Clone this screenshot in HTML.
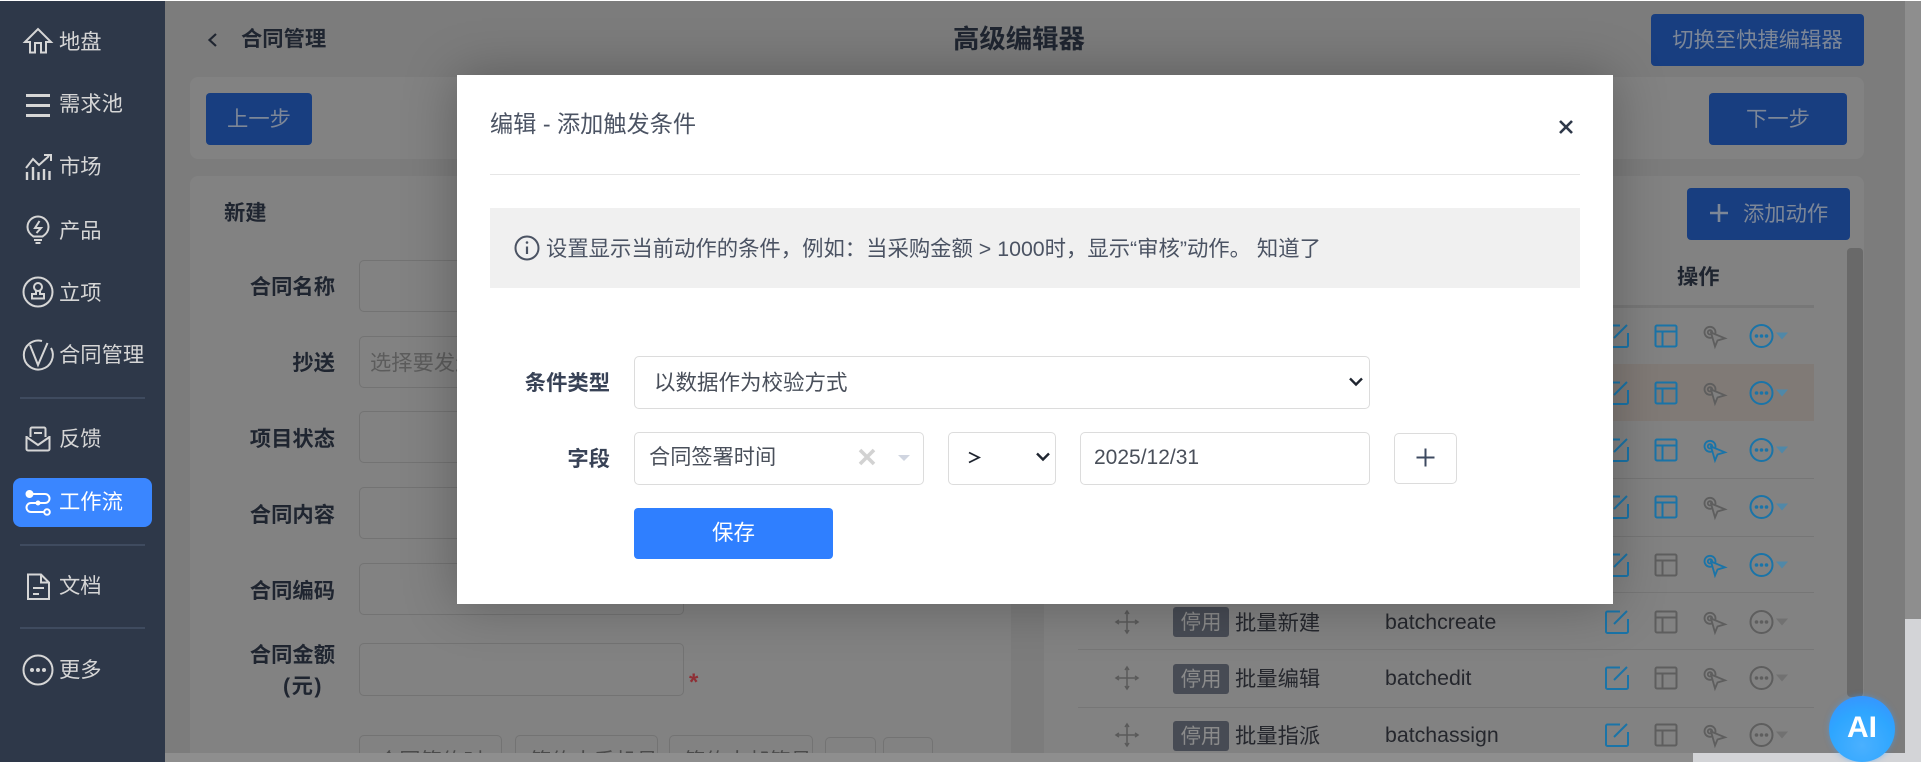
<!DOCTYPE html>
<html lang="zh"><head><meta charset="utf-8"><title>高级编辑器</title>
<style>
html,body{margin:0;padding:0;background:#fff;width:1921px;height:763px;overflow:hidden}
body{position:relative;font-family:"Liberation Sans","Noto Sans CJK SC",sans-serif;font-size:21.3px}
div,span{box-sizing:border-box}
.a{position:absolute}
.t{position:absolute;white-space:nowrap;line-height:30px;height:30px;margin-top:1px;filter:blur(.25px)}
.r{text-align:right}
.b{font-weight:700}
.card{position:absolute;background:#828282;border-radius:8px 8px 0 0}
.btn{position:absolute;background:#183e80;border-radius:4px;color:#7d8797;text-align:center;font-size:21.3px}
.in{position:absolute;border:1.5px solid #737373;border-radius:5px}
.nav{color:#d6d6d6;left:59px}
.lab{color:#1f2530;font-weight:700;left:215px;width:120px;text-align:right}
.hr{position:absolute;left:20px;width:125px;height:2px;background:#3f4b5f}
.tag{position:absolute;left:1173px;width:56px;height:30px;background:#474b54;border-radius:3px;color:#8b8b8b;text-align:center;line-height:31px;font-size:20.5px}
.nm{color:#25272d;left:1235px}
.cd{color:#25272d;left:1385px;font-size:21.3px}
.mb{position:absolute;border:1.5px solid #dcdcdc;border-radius:5px;background:#fff}
</style></head>
<body>
<!-- main background -->
<div class="a" style="left:165px;top:1px;width:1740px;height:752px;background:#7c7c7c"></div>
<div class="card" style="left:190px;top:77px;width:1674px;height:82px;border-radius:8px"></div>
<div class="card" style="left:190px;top:176px;width:821px;height:577px"></div>
<div class="card" style="left:1044px;top:176px;width:820px;height:577px"></div>

<!-- header -->
<div class="t b" style="left:241px;top:23px;color:#1f2530">合同管理</div>
<div class="t b" style="left:953px;top:23px;color:#1f2530;font-size:26.4px">高级编辑器</div>
<div class="btn" style="left:1651px;top:14px;width:213px;height:52px;line-height:53px">切换至快捷编辑器</div>
<div class="btn" style="left:206px;top:93px;width:106px;height:52px;line-height:53px">上一步</div>
<div class="btn" style="left:1709px;top:93px;width:138px;height:52px;line-height:53px">下一步</div>
<div class="btn" style="left:1687px;top:188px;width:163px;height:52px"></div>
<div class="t" style="left:1743px;top:198px;color:#7d8797">添加动作</div>

<!-- left form -->
<div class="t b" style="left:224px;top:197px;color:#1f2530">新建</div>
<div class="t lab" style="top:271px">合同名称</div>
<div class="t lab" style="top:347px">抄送</div>
<div class="t lab" style="top:423px">项目状态</div>
<div class="t lab" style="top:499px">合同内容</div>
<div class="t lab" style="top:575px">合同编码</div>
<div class="t lab" style="top:639px">合同金额</div>
<div class="t lab" style="top:670px;width:108px;letter-spacing:1.5px">(元)</div>
<div class="in" style="left:359px;top:260px;width:325px;height:52px"></div>
<div class="in" style="left:359px;top:336px;width:325px;height:52px"></div>
<div class="t" style="left:370px;top:347px;color:#5c5c5c">选择要发送的人</div>
<div class="in" style="left:359px;top:411px;width:325px;height:52px"></div>
<div class="in" style="left:359px;top:487px;width:325px;height:52px"></div>
<div class="in" style="left:359px;top:563px;width:325px;height:52px"></div>
<div class="in" style="left:359px;top:643px;width:325px;height:53px"></div>
<div class="t" style="left:689px;top:667px;color:#8f2f35;font-size:24px;font-weight:700">*</div>
<div class="in" style="left:359px;top:735px;width:143px;height:50px"></div>
<div class="in" style="left:515px;top:735px;width:143px;height:50px"></div>
<div class="in" style="left:669px;top:735px;width:144px;height:50px"></div>
<div class="in" style="left:825px;top:737px;width:51px;height:50px"></div>
<div class="in" style="left:883px;top:737px;width:50px;height:50px"></div>
<div class="t" style="left:378px;top:745px;color:#4b4b4b">合同签约时</div>
<div class="t" style="left:530px;top:745px;color:#4b4b4b">签约人手机号</div>
<div class="t" style="left:684px;top:745px;color:#4b4b4b">签约人邮箱号</div>

<!-- right table -->
<div class="t b" style="left:1677px;top:261px;color:#1f2530">操作</div>
<div class="a" style="left:1078px;top:305px;width:736px;height:3px;background:#777"></div>
<div class="a" style="left:1078px;top:364px;width:736px;height:57px;background:#807a76"></div>
<div class="a" style="left:1078px;top:478px;width:736px;height:1px;background:#767676"></div>
<div class="a" style="left:1078px;top:536px;width:736px;height:1px;background:#767676"></div>
<div class="a" style="left:1078px;top:592px;width:736px;height:1px;background:#767676"></div>
<div class="a" style="left:1078px;top:649px;width:736px;height:1px;background:#767676"></div>
<div class="a" style="left:1078px;top:707px;width:736px;height:1px;background:#767676"></div>
<div class="a" style="left:1847px;top:248px;width:16px;height:449px;background:#696969;border-radius:4px"></div>

<div class="tag" style="top:607px">停用</div>
<div class="t nm" style="top:607px">批量新建</div>
<div class="t cd" style="top:606px">batchcreate</div>
<div class="tag" style="top:664px">停用</div>
<div class="t nm" style="top:663px">批量编辑</div>
<div class="t cd" style="top:662px">batchedit</div>
<div class="tag" style="top:721px">停用</div>
<div class="t nm" style="top:720px">批量指派</div>
<div class="t cd" style="top:719px">batchassign</div>

<svg class="a" style="left:0;top:0" width="1921" height="763" fill="none" stroke-width="2">
<defs>
<g id="ed" stroke="currentColor" stroke-width="2" fill="none"><path d="M3-10.500H-9.500A1.500 1.500 0 0 0-11-9V9.500A1.500 1.500 0 0 0-9.500 11H9.500A1.500 1.500 0 0 0 11 9.500V-3M-3 2L10-11"/></g>
<g id="la" stroke="currentColor" stroke-width="2" fill="none"><rect x="-10.500" y="-10.500" width="21" height="21" rx="1.500"/><path d="M-10.500-4.500H10.500M-3.500-4.500V10.500"/></g>
<g id="cu" stroke="currentColor" stroke-width="1.800" fill="none"><circle cx="-5" cy="-3.700" r="5.500"/><circle cx="-5" cy="-3.700" r="2.200"/><path d="M-4-3.500L10 2.300 2.500 4.500 0 10.500Z" fill="#808080"/></g>
<g id="mo"><circle r="11" stroke="currentColor" stroke-width="2" fill="none"/><circle cx="-5" r="1.800" fill="currentColor"/><circle r="1.800" fill="currentColor"/><circle cx="5" r="1.800" fill="currentColor"/></g>
<path id="tr" d="M-6-3.500H6L0 3.500Z" fill="currentColor"/>
<g id="mv" stroke="#5a5a5a" stroke-width="1.500" fill="none"><path d="M0-11V11M-11 0H11M-2-8L0-11 2-8M-2 8L0 11 2 8M-8-2L-11 0-8 2M8-2L11 0 8 2"/></g>
</defs>
<!-- back chevron -->
<path d="M216 34L209.500 40 216 46" stroke="#1f2530" stroke-width="2.200"/>
<!-- plus on add -->
<path d="M1710 213H1728M1719 204V222" stroke="#7d8797" stroke-width="2.600"/>
<!-- move icons -->
<use href="#mv" x="1127" y="622"/><use href="#mv" x="1127" y="678"/><use href="#mv" x="1127" y="735"/>
<!-- rows -->
<g color="#1a74a8">
<use href="#ed" x="1617" y="336"/><use href="#ed" x="1617" y="393"/><use href="#ed" x="1617" y="450"/><use href="#ed" x="1617" y="507"/><use href="#ed" x="1617" y="565"/><use href="#ed" x="1617" y="622"/><use href="#ed" x="1617" y="678"/><use href="#ed" x="1617" y="735"/>
<use href="#la" x="1666" y="336"/><use href="#la" x="1666" y="393"/><use href="#la" x="1666" y="450"/><use href="#la" x="1666" y="507"/>
<use href="#cu" x="1715" y="450"/><use href="#cu" x="1715" y="565"/>
<use href="#mo" x="1761.500" y="336"/><use href="#mo" x="1761.500" y="393"/><use href="#mo" x="1761.500" y="450"/><use href="#mo" x="1761.500" y="507"/><use href="#mo" x="1761.500" y="565"/>
</g>
<g color="#5e5e5e">
<use href="#cu" x="1715" y="336"/><use href="#cu" x="1715" y="393"/><use href="#cu" x="1715" y="507"/><use href="#cu" x="1715" y="622"/><use href="#cu" x="1715" y="678"/><use href="#cu" x="1715" y="735"/>
<use href="#la" x="1666" y="565"/><use href="#la" x="1666" y="622"/><use href="#la" x="1666" y="678"/><use href="#la" x="1666" y="735"/>
<use href="#mo" x="1761.500" y="622"/><use href="#mo" x="1761.500" y="678"/><use href="#mo" x="1761.500" y="735"/>
</g>
<g color="#5088a8"><use href="#tr" x="1782" y="336"/><use href="#tr" x="1782" y="393"/><use href="#tr" x="1782" y="450"/><use href="#tr" x="1782" y="507"/><use href="#tr" x="1782" y="565"/></g>
<g color="#717171"><use href="#tr" x="1782" y="622"/><use href="#tr" x="1782" y="678"/><use href="#tr" x="1782" y="735"/></g>
</svg>

<!-- scroll bars -->
<div class="a" style="left:165px;top:753px;width:1528px;height:9px;background:#8e8e8e"></div>
<div class="a" style="left:1693px;top:753px;width:228px;height:9px;background:#d3d4d7"></div>
<div class="a" style="left:1905px;top:1px;width:16px;height:618px;background:#8e8e8e"></div>
<div class="a" style="left:1905px;top:619px;width:16px;height:143px;background:#d3d4d7"></div>

<!-- sidebar -->
<div class="a" style="left:0;top:1px;width:165px;height:761px;background:#2e3849"></div>
<div class="a" style="left:13px;top:478px;width:139px;height:49px;background:#3a86ff;border-radius:8px"></div>
<div class="hr" style="top:397px"></div><div class="hr" style="top:544px"></div><div class="hr" style="top:627px"></div>
<div class="t nav" style="top:26px">地盘</div>
<div class="t nav" style="top:88px">需求池</div>
<div class="t nav" style="top:151px">市场</div>
<div class="t nav" style="top:215px">产品</div>
<div class="t nav" style="top:277px">立项</div>
<div class="t nav" style="top:339px">合同管理</div>
<div class="t nav" style="top:423px">反馈</div>
<div class="t nav" style="top:486px;color:#fff">工作流</div>
<div class="t nav" style="top:570px">文档</div>
<div class="t nav" style="top:654px">更多</div>
<svg class="a" style="left:0;top:0" width="165" height="763" fill="none" stroke="#d6d6d6" stroke-width="2">
<path d="M25 42L38 29 51 42H46V52.500H41V43H35V52.500H30V42Z"/>
<path d="M26 95.500H50M26 105.500H50M26 115.500H50" stroke-width="3"/>
<path d="M26 168L33 159 39 165 49 156M44 155H51V161"/>
<path d="M27 180V172M33 180V167M38.500 180V172M44 180V169M49.500 180V171" stroke-width="2.400"/>
<path d="M33.500 236.500C29.500 234 27.500 231 27.500 227A10.500 10.500 0 0 1 48.500 227C48.500 231 46.500 234 42.500 236.500Z"/><path d="M34 240H42M35.500 243H40.500M39.500 221L35 228H41L36.500 233"/>
<circle cx="38" cy="292" r="14.500"/><circle cx="38" cy="287" r="4"/><path d="M36 291V294H32V298.500H44V294H40V291"/>
<path d="M42 341A14.500 14.500 0 1 0 51 348"/><path d="M30 345L38 365 47.500 343"/>
<path d="M30.500 437V429A1.500 1.500 0 0 1 32 427.500H44A1.500 1.500 0 0 1 45.500 429V437M26.500 436V449A1.500 1.500 0 0 0 28 450.500H48A1.500 1.500 0 0 0 49.500 449V436M26.500 437L38 445 49.500 437M34 433H42"/>
<g stroke="#fff"><circle cx="29.500" cy="494" r="3" fill="#fff"/><path d="M32 494H45A4.500 4.500 0 0 1 45 503H31A4.500 4.500 0 0 0 31 512H43.500"/><circle cx="38" cy="503" r="1.500" fill="#fff"/><circle cx="47" cy="512" r="2.800"/></g>
<path d="M28 574.500H41L49 582.500V599H28ZM41 574.500V582.500H49M33 588H44M33 594H39"/>
<circle cx="38" cy="670" r="14.500"/><circle cx="32" cy="670" r="2" fill="#d6d6d6" stroke="none"/><circle cx="38" cy="670" r="2" fill="#d6d6d6" stroke="none"/><circle cx="44" cy="670" r="2" fill="#d6d6d6" stroke="none"/>
</svg>

<!-- modal -->
<div class="a" style="left:457px;top:75px;width:1156px;height:529px;background:#fff;box-shadow:0 0 50px rgba(0,0,0,.28)"></div>
<div class="t" style="left:490px;top:108px;color:#4b5363;font-size:23.2px">编辑 - 添加触发条件</div>
<svg class="a" style="left:1555px;top:116px" width="22" height="22" fill="none" stroke="#2e3849" stroke-width="2.600"><path d="M5 5L17 17M17 5L5 17"/></svg>
<div class="a" style="left:490px;top:174px;width:1090px;height:1px;background:#e6e6e6"></div>
<div class="a" style="left:490px;top:208px;width:1090px;height:80px;background:#f0f0f0"></div>
<svg class="a" style="left:514px;top:235px" width="26" height="26" fill="none" stroke="#4b5363" stroke-width="2"><circle cx="13" cy="13" r="11.500"/><path d="M13 11.500V19" stroke-width="2.200"/><circle cx="13" cy="7.500" r="1.300" fill="#4b5363" stroke="none"/></svg>
<div class="t" style="left:546px;top:233px;color:#4b5363;font-size:21.35px">设置显示当前动作的条件，例如：当采购金额 &gt; 1000时，显示“审核”动作。 知道了</div>

<div class="t b" style="left:490px;top:367px;width:120px;text-align:right;color:#384256;font-size:21.3px">条件类型</div>
<div class="mb" style="left:634px;top:356px;width:736px;height:53px"></div>
<div class="t" style="left:654px;top:367px;color:#494f5a;font-size:21.5px">以数据作为校验方式</div>
<svg class="a" style="left:1347px;top:375px" width="18" height="14" fill="none" stroke="#1f2530" stroke-width="2.400"><path d="M3 3.500L9 9.500 15 3.500"/></svg>

<div class="t b" style="left:490px;top:443px;width:120px;text-align:right;color:#384256;font-size:21.3px">字段</div>
<div class="mb" style="left:634px;top:432px;width:290px;height:53px"></div>
<div class="t" style="left:649px;top:442px;color:#494f5a;font-size:21.2px">合同签署时间</div>
<svg class="a" style="left:857px;top:447px" width="20" height="20" fill="none" stroke="#d2d2d2" stroke-width="3.600"><path d="M3 3L17 17M17 3L3 17"/></svg>
<svg class="a" style="left:897px;top:453px" width="14" height="10"><path d="M1 2H13L7 8Z" fill="#d0d5e0"/></svg>
<div class="mb" style="left:948px;top:432px;width:108px;height:53px"></div>
<svg class="a" style="left:966px;top:449px" width="16" height="18" fill="none" stroke="#1f2530" stroke-width="1.800"><path d="M3 3.500L13 8.500 3 13.500"/></svg>
<svg class="a" style="left:1034px;top:450px" width="18" height="14" fill="none" stroke="#1f2530" stroke-width="2.400"><path d="M3 3.500L9 9.500 15 3.500"/></svg>
<div class="mb" style="left:1080px;top:432px;width:290px;height:53px"></div>
<div class="t" style="left:1094px;top:442px;color:#494f5a;font-size:21px">2025/12/31</div>
<div class="mb" style="left:1394px;top:433px;width:63px;height:51px"></div>
<svg class="a" style="left:1415px;top:447px" width="21" height="21" fill="none" stroke="#3d4a60" stroke-width="2"><path d="M1.500 10.500H19.500M10.500 1.500V19.500"/></svg>
<div class="a" style="left:634px;top:508px;width:199px;height:51px;background:#2f7fff;border-radius:4px;color:#fff;text-align:center;line-height:51px;font-size:21.5px">保存</div>

<!-- AI button -->
<div class="a" style="left:1829px;top:696px;width:66px;height:66px;border-radius:50%;background:radial-gradient(circle at 50% 75%,#4ab0ff,#2ea6ff 55%,#3a8cff);box-shadow:0 0 6px rgba(60,160,255,.5);color:#fff;text-align:center;line-height:64px;font-size:30px;font-weight:700">AI</div>
<div class="a" style="left:0;top:762px;width:1921px;height:1px;background:#fff"></div>
</body></html>
